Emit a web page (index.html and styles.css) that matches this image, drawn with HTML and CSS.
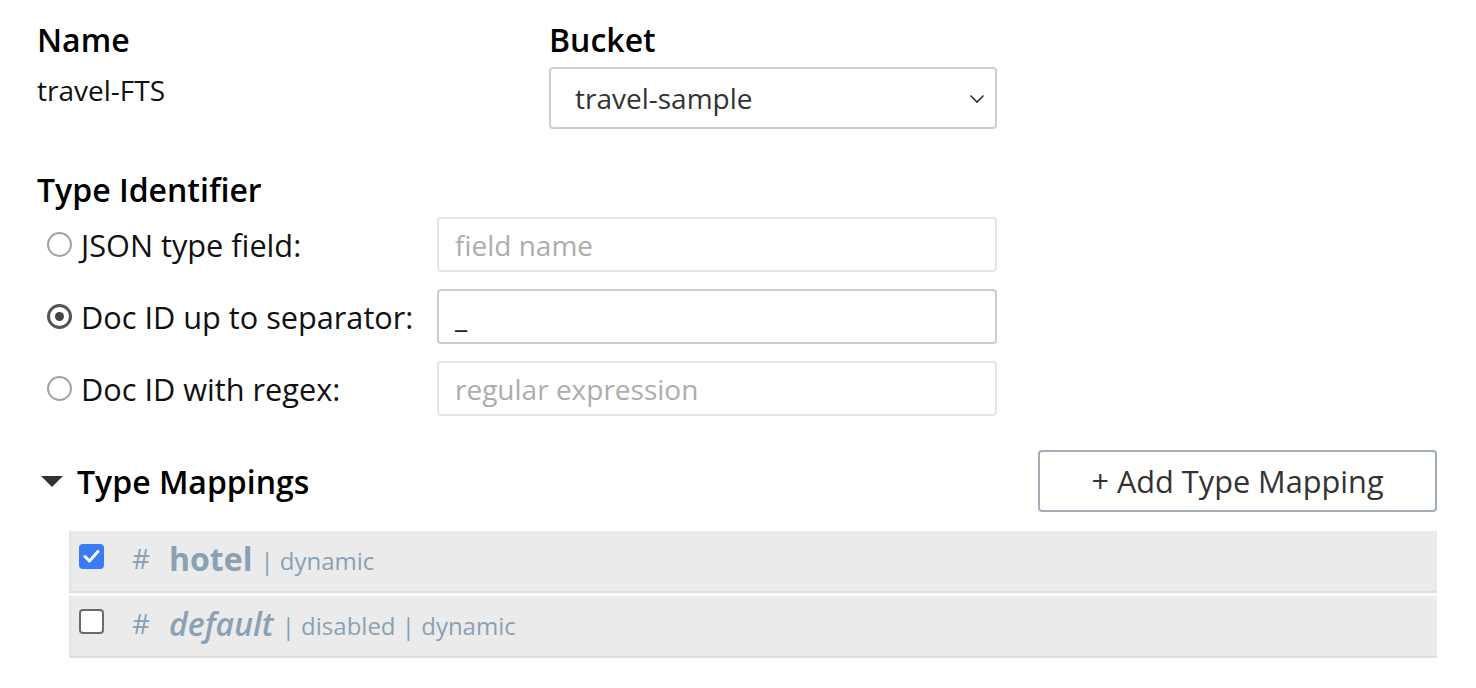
FILE: index.html
```html
<!DOCTYPE html>
<html>
<head>
<meta charset="utf-8">
<link rel="stylesheet" href="styles.css">
</head>
<body>
<div class="page">
  <div class="top-row">
    <div class="col-name">
      <div class="label">Name</div>
      <div class="name-value">travel-FTS</div>
    </div>
    <div class="col-bucket">
      <div class="label">Bucket</div>
      <div class="select">
        <span>travel-sample</span>
        <svg class="chev" width="16" height="10" viewBox="0 0 16 10"><path d="M1.5 1.5 L8 8 L14.5 1.5" fill="none" stroke="#333" stroke-width="1.6"/></svg>
      </div>
    </div>
  </div>

  <div class="label type-id">Type Identifier</div>
  <div class="radio-row">
    <div class="radio-label"><span class="radio"></span><span>JSON type field:</span></div>
    <div class="input light"><span class="placeholder">field name</span></div>
  </div>
  <div class="radio-row">
    <div class="radio-label"><span class="radio on"></span><span>Doc ID up to separator:</span></div>
    <div class="input dark"><span class="value">_</span></div>
  </div>
  <div class="radio-row">
    <div class="radio-label"><span class="radio"></span><span>Doc ID with regex:</span></div>
    <div class="input light"><span class="placeholder">regular expression</span></div>
  </div>

  <div class="mapping-head">
    <div class="mapping-title"><span class="caret"></span><span>Type Mappings</span></div>
    <div class="btn">+ Add Type Mapping</div>
  </div>

  <div class="mapping-list">
    <div class="mapping-row">
      <span class="check on"><svg width="17" height="14" viewBox="0 0 17 14"><path d="M2 7.5 L6.5 12 L15 2.5" fill="none" stroke="#fff" stroke-width="3" stroke-linecap="round" stroke-linejoin="round"/></svg></span>
      <span class="hash">#</span>
      <span class="type-name">hotel</span>
      <span class="meta">| dynamic</span>
    </div>
    <div class="mapping-row">
      <span class="check"></span>
      <span class="hash">#</span>
      <span class="type-name italic">default</span>
      <span class="meta">| disabled | dynamic</span>
    </div>
  </div>
</div>
</body>
</html>
```

FILE: styles.css
```css
* { box-sizing: border-box; }
body {
  margin: 0;
  background: #fff;
  font-family: "Open Sans", "DejaVu Sans", sans-serif;
  color: #000;
}
.page {
  padding: 21px 0 0 37px;
  width: 1437px;
}
.top-row {
  display: flex;
}
.col-name { width: 512px; }
.col-bucket { width: 448px; }
.label {
  font-size: 32px;
  font-weight: 600;
  line-height: 38px;
}
.name-value {
  font-size: 28px;
  line-height: 38px;
  margin-top: 12px;
  color: #111;
}
.select {
  margin-top: 8px;
  height: 62px;
  border: 2px solid #cfcfcf;
  border-radius: 4px;
  display: flex;
  align-items: center;
  justify-content: space-between;
  padding: 0 10px 0 24px;
  font-size: 28px;
  color: #333;
}
.chev { margin-top: 2px; }
.type-id { margin-top: 42px; }
.radio-row {
  display: flex;
  align-items: center;
  margin-top: 8px;
  height: 55px;
}
.radio-row + .radio-row { margin-top: 17px; }
.radio-label {
  width: 400px;
  display: flex;
  align-items: center;
  font-size: 30.7px;
  color: #111;
}
.radio {
  width: 25px;
  height: 25px;
  border-radius: 50%;
  border: 2px solid #a3a3a3;
  margin: 0 9px 0 10px;
  flex: none;
  display: flex;
  align-items: center;
  justify-content: center;
}
.radio.on {
  border: 3px solid #555;
}
.radio.on::after {
  content: "";
  width: 9px;
  height: 9px;
  border-radius: 50%;
  background: #444;
}
.input {
  width: 560px;
  height: 55px;
  border-radius: 4px;
  display: flex;
  align-items: center;
  padding-left: 16px;
  font-size: 28px;
}
.input.light { border: 2px solid #e4e4e4; }
.input.dark { border: 2px solid #cdcdcd; }
.placeholder { color: #adadad; }
.value { color: #222; }
.mapping-head {
  margin-top: 34px;
  display: flex;
  align-items: center;
  justify-content: space-between;
}
.mapping-title {
  display: flex;
  align-items: center;
  font-size: 32px;
  font-weight: 600;
}
.caret {
  width: 0;
  height: 0;
  border-left: 11px solid transparent;
  border-right: 11px solid transparent;
  border-top: 11px solid #333;
  margin: 0 14px 0 4px;
}
.btn {
  width: 399px;
  height: 62px;
  border: 2px solid #a2adb9;
  border-radius: 4px;
  display: flex;
  align-items: center;
  justify-content: center;
  font-size: 30.7px;
  color: #333;
}
.mapping-list {
  margin: 19px 0 0 32px;
}
.mapping-row {
  height: 62px;
  background: #ebebeb;
  border-left: 2px solid #e1e5ea;
  border-bottom: 2px solid #d9dfe7;
  display: flex;
  align-items: center;
  padding: 0 0 6px 8px;
  color: #8aa1b3;
}
.mapping-row + .mapping-row { margin-top: 3px; }
.check {
  width: 25px;
  height: 25px;
  border-radius: 4px;
  border: 2px solid #6b6b6b;
  background: #fff;
  flex: none;
  display: flex;
  align-items: center;
  justify-content: center;
  margin-top: -4px;
}
.check.on {
  border: none;
  background: #3a7af3;
}
.hash {
  font-size: 28px;
  margin-left: 28px;
  width: 37px;
}
.type-name {
  font-size: 32px;
  font-weight: 700;
  margin-right: 8px;
}
.type-name.italic { font-style: italic; font-weight: 600; }
.meta {
  font-size: 24px;
  padding-top: 4px;
}
```
